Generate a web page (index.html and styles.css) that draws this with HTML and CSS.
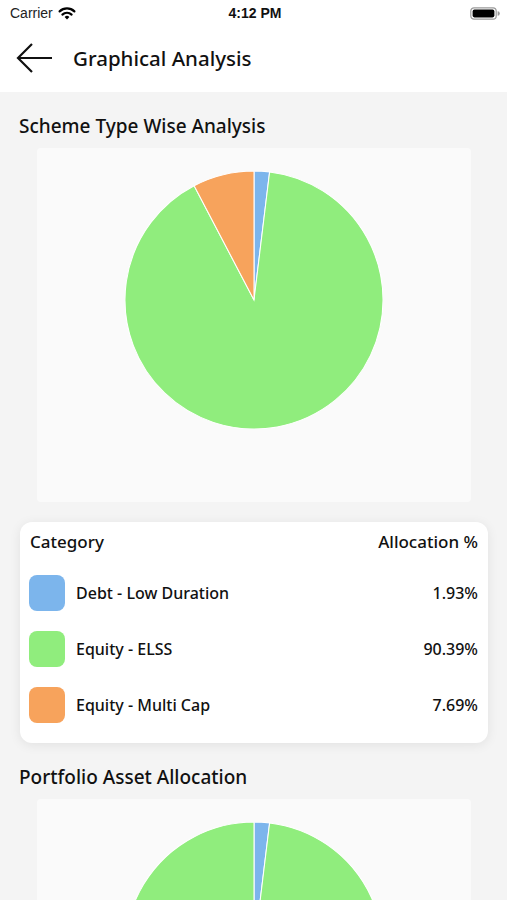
FILE: index.html
```html
<!DOCTYPE html>
<html>
<head>
  <title>Graphical Analysis</title>
  <link rel="stylesheet" href="styles.css">
</head>
<body>
  <div class="status-bar">
    <div class="carrier">
      Carrier
      <svg class="wifi" width="18" height="14" viewBox="0 0 18 14">
        <path d="M9 13.5 L6.6 10.9 A3.4 3.4 0 0 1 11.4 10.9 Z" fill="#000"/>
        <path d="M4.4 8.6 A6.6 6.6 0 0 1 13.6 8.6" fill="none" stroke="#000" stroke-width="2.2" stroke-linecap="round"/>
        <path d="M1.6 5.4 A10.6 10.6 0 0 1 16.4 5.4" fill="none" stroke="#000" stroke-width="2.2" stroke-linecap="round"/>
      </svg>
    </div>
    <div class="time">4:12 PM</div>
    <div class="battery">
      <svg width="30" height="13" viewBox="0 0 30 13">
        <rect x="0.8" y="0.8" width="25.4" height="11.4" rx="3.2" fill="none" stroke="#9a9a9a" stroke-width="1.2"/>
        <rect x="2.6" y="2.6" width="21.8" height="7.8" rx="1.8" fill="#000"/>
        <path d="M27.6 4.3 A2 2 0 0 1 27.6 8.7 Z" fill="#9a9a9a"/>
      </svg>
    </div>
  </div>

  <div class="app-header">
    <svg class="back" width="38" height="32" viewBox="0 0 38 32">
      <path d="M37 16 H3 M17 2 L3 16 L17 30" fill="none" stroke="#111" stroke-width="2.2"/>
    </svg>
    <h1>Graphical Analysis</h1>
  </div>

  <div class="content">
    <h2>Scheme Type Wise Analysis</h2>
    <div class="chart-box">
      <svg class="pie" width="258" height="258" viewBox="-100 -100 200 200">
        <path d="M0 0 L0 -100 A100 100 0 0 1 12.10 -99.27 Z" fill="#7cb5ec" stroke="#fff" stroke-width="0.8"/>
        <path d="M0 0 L12.10 -99.27 A100 100 0 1 1 -46.41 -88.58 Z" fill="#90ed7d" stroke="#fff" stroke-width="0.8"/>
        <path d="M0 0 L-46.41 -88.58 A100 100 0 0 1 0 -100 Z" fill="#f7a35c" stroke="#fff" stroke-width="0.8"/>
      </svg>
    </div>

    <div class="alloc-card">
      <div class="alloc-head">
        <span>Category</span>
        <span>Allocation %</span>
      </div>
      <div class="alloc-row">
        <span class="swatch blue"></span>
        <span class="name">Debt - Low Duration</span>
        <span class="pct">1.93%</span>
      </div>
      <div class="alloc-row">
        <span class="swatch green"></span>
        <span class="name">Equity - ELSS</span>
        <span class="pct">90.39%</span>
      </div>
      <div class="alloc-row">
        <span class="swatch orange"></span>
        <span class="name">Equity - Multi Cap</span>
        <span class="pct">7.69%</span>
      </div>
    </div>

    <h2>Portfolio Asset Allocation</h2>
    <div class="chart-box">
      <svg class="pie" width="258" height="258" viewBox="-100 -100 200 200">
        <path d="M0 0 L0 -100 A100 100 0 0 1 12.10 -99.27 Z" fill="#7cb5ec" stroke="#fff" stroke-width="0.8"/>
        <path d="M0 0 L12.10 -99.27 A100 100 0 1 1 0 -100 Z" fill="#90ed7d" stroke="#fff" stroke-width="0.8"/>
      </svg>
    </div>
  </div>
</body>
</html>
```

FILE: styles.css
```css
body {
  margin: 0;
  font-family: "Noto Sans", "Open Sans", sans-serif;
  color: #111;
  background-color: #f4f4f4;
}

.status-bar {
  height: 26px;
  background-color: #fff;
  display: grid;
  grid-template-columns: 1fr auto 1fr;
  align-items: center;
  padding: 0 7px 0 10px;
  font-family: "Liberation Sans", Arial, sans-serif;
  font-size: 14px;
}

.carrier {
  display: flex;
  align-items: center;
  gap: 5px;
  color: #222;
}

.time {
  font-weight: bold;
  color: #111;
}

.battery {
  justify-self: end;
  display: flex;
}

.app-header {
  height: 63px;
  padding-bottom: 3px;
  background-color: #fff;
  display: flex;
  align-items: center;
  padding-left: 15px;
}

.back {
  margin-right: 20px;
}

.app-header h1 {
  margin: 0;
  font-size: 20.5px;
  font-weight: 500;
}

.content {
  padding: 22px 19px 0 19px;
}

h2 {
  margin: 0 0 10px 0;
  font-size: 19px;
  line-height: 24px;
  font-weight: 500;
}

.chart-box {
  height: 354px;
  margin: 0 17px 20px 18px;
  background-color: #fafafa;
  border-radius: 4px;
  display: flex;
  justify-content: center;
  padding-top: 23px;
  box-sizing: border-box;
}

.alloc-card {
  background-color: #fff;
  border-radius: 12px;
  box-shadow: 0 2px 12px rgba(0, 0, 0, 0.08);
  padding: 9px 10px 10px 10px;
  margin: 0 0 22px 1px;
}

.alloc-head {
  display: flex;
  justify-content: space-between;
  font-size: 17px;
  line-height: 22px;
  font-weight: 500;
  margin-bottom: 12px;
}

.alloc-row {
  display: flex;
  align-items: center;
  height: 56px;
  font-size: 16px;
  font-weight: 500;
}

.swatch {
  width: 36px;
  height: 36px;
  border-radius: 8px;
  margin-right: 11px;
  margin-left: -1px;
}

.swatch.blue {
  background-color: #7cb5ec;
}

.swatch.green {
  background-color: #90ed7d;
}

.swatch.orange {
  background-color: #f7a35c;
}

.name {
  flex: 1;
}
```
